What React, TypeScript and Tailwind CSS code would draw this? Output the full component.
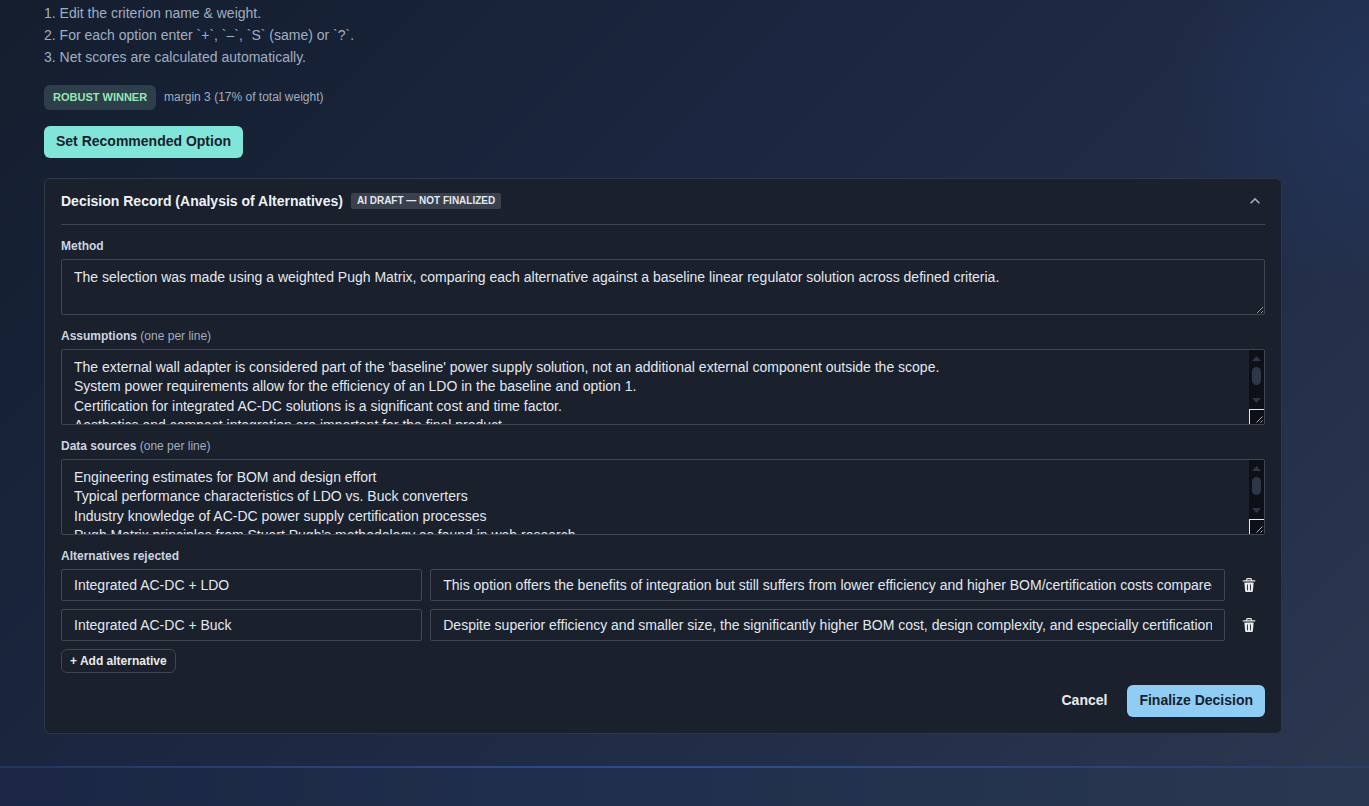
import React from 'react';

// Rejected alternatives with the reason each one was dropped
const initialAlternatives = [
    {
        id: 1,
        name: 'Integrated AC-DC + LDO',
        reason: 'This option offers the benefits of integration but still suffers from lower efficiency and higher BOM/certification costs compared to the baseline.'
    },
    {
        id: 2,
        name: 'Integrated AC-DC + Buck',
        reason: 'Despite superior efficiency and smaller size, the significantly higher BOM cost, design complexity, and especially certification effort rule it out.'
    }
];

const assumptions = [
    "The external wall adapter is considered part of the 'baseline' power supply solution, not an additional external component outside the scope.",
    'System power requirements allow for the efficiency of an LDO in the baseline and option 1.',
    'Certification for integrated AC-DC solutions is a significant cost and time factor.',
    'Aesthetics and compact integration are important for the final product.'
];

const dataSources = [
    'Engineering estimates for BOM and design effort',
    'Typical performance characteristics of LDO vs. Buck converters',
    'Industry knowledge of AC-DC power supply certification processes',
    "Pugh Matrix principles from Stuart Pugh's methodology as found in web research."
];

const fieldClass =
    'block w-full rounded-xs border border-[#40454f] bg-transparent px-3 text-sm text-[#e2e8f0] outline-none focus:border-[#90cdf4]';

const TrashIcon: React.FC = () => (
    <svg viewBox="0 0 24 24" className="size-3.5" fill="currentColor" aria-hidden="true">
        <path d="M19.452 7.5H4.547a.5.5 0 00-.5.545l1.287 14.136A2 2 0 007.326 24h9.347a2 2 0 001.992-1.819L19.95 8.045a.5.5 0 00-.129-.382.5.5 0 00-.369-.163zm-9.2 13a.75.75 0 01-1.5 0v-9a.75.75 0 011.5 0zm5 0a.75.75 0 01-1.5 0v-9a.75.75 0 011.5 0zM22 4h-4.75a.25.25 0 01-.25-.25V2.5A2.5 2.5 0 0014.5 0h-5A2.5 2.5 0 007 2.5v1.25a.25.25 0 01-.25.25H2a1 1 0 000 2h20a1 1 0 000-2zM9 3.75V2.5a.5.5 0 01.5-.5h5a.5.5 0 01.5.5v1.25a.25.25 0 01-.25.25h-5.5A.25.25 0 019 3.75z" />
    </svg>
);

// Dark scroll bar laid over the right edge of a long text area
const ScrollTrack: React.FC = () => (
    <div className="pointer-events-none absolute inset-y-px right-px flex w-[15px] flex-col bg-[#0d1117]" aria-hidden="true">
        <div className="flex flex-1 flex-col items-center py-1.5">
            <svg viewBox="0 0 9 5" className="h-[5px] w-[9px] fill-[#2d3748]">
                <path d="M4.5 0L9 5H0z" />
            </svg>
            <div className="mt-1.5 h-[18px] w-[9px] rounded-full bg-[#2d3748]" />
            <svg viewBox="0 0 9 5" className="mt-auto h-[5px] w-[9px] fill-[#2d3748]">
                <path d="M0 0h9L4.5 5z" />
            </svg>
        </div>
        <div className="flex size-[15px] items-end justify-end border-t border-l border-[#e5e7eb]">
            <svg viewBox="0 0 8 8" className="size-2" stroke="#c3c6cb" strokeWidth="0.9" fill="none">
                <path d="M0.5 6.5l6-6M4.5 6.5l2-2" />
            </svg>
        </div>
    </div>
);

interface TextFieldProps {
    id: string;
    label: string;
    hint?: string;
    value: string;
    heightClass: string;
    scrolls?: boolean;
}

const TextField: React.FC<TextFieldProps> = ({ id, label, hint, value, heightClass, scrolls }) => (
    <div>
        <label htmlFor={id} className="mb-1 block text-xs leading-[18px] font-semibold text-[#cbd5e0]">
            {label}
            {hint && <span className="font-normal text-[#a0aec0]"> {hint}</span>}
        </label>
        <div className="relative">
            <textarea
                id={id}
                defaultValue={value}
                className={`${fieldClass} ${heightClass} resize-y py-2 leading-snug [scrollbar-color:#2d3748_#0d1117]`}
            />
            {scrolls && <ScrollTrack />}
        </div>
    </div>
);

/**
 * DecisionRecord
 *
 * Card with the drafted analysis of alternatives, editable until finalized.
 */
const DecisionRecord: React.FC = () => {
    return (
        <section className="mt-5 rounded-md border border-[#2d3748] bg-[#1a202c] px-4 pt-3 pb-4">
            {/* Header */}
            <div className="flex items-center justify-between border-b border-[#3b4354] pb-[13px]">
                <div className="flex items-center gap-2">
                    <h2 className="text-sm leading-5 font-bold text-[#edf2f7]">
                        Decision Record (Analysis of Alternatives)
                    </h2>
                    <span className="rounded-xs bg-[#3a404c] px-1.5 text-[10px] leading-4 font-bold text-[#e2e8f0] uppercase">
                        AI draft — not finalized
                    </span>
                </div>
                <button type="button" aria-label="Collapse" className="text-[#a0aec0]">
                    <svg viewBox="0 0 24 24" className="size-5" fill="currentColor" aria-hidden="true">
                        <path d="M12 8l-6 6 1.41 1.41L12 10.83l4.59 4.58L18 14z" />
                    </svg>
                </button>
            </div>

            <form className="mt-3 flex flex-col gap-3" onSubmit={(e) => e.preventDefault()}>
                <TextField
                    id="method"
                    label="Method"
                    value="The selection was made using a weighted Pugh Matrix, comparing each alternative against a baseline linear regulator solution across defined criteria."
                    heightClass="h-14"
                />
                <TextField
                    id="assumptions"
                    label="Assumptions"
                    hint="(one per line)"
                    value={assumptions.join('\n')}
                    heightClass="h-19"
                    scrolls
                />
                <TextField
                    id="data-sources"
                    label="Data sources"
                    hint="(one per line)"
                    value={dataSources.join('\n')}
                    heightClass="h-19"
                    scrolls
                />

                {/* Alternatives */}
                <fieldset>
                    <legend className="mb-1 text-xs leading-[18px] font-semibold text-[#cbd5e0]">
                        Alternatives rejected
                    </legend>
                    <div className="flex flex-col items-start gap-2">
                        {initialAlternatives.map((alt) => (
                            <div key={alt.id} className="grid w-full grid-cols-[5fr_11fr_32px] gap-2">
                                <input
                                    type="text"
                                    aria-label="Alternative"
                                    defaultValue={alt.name}
                                    className={`${fieldClass} h-8`}
                                />
                                <input
                                    type="text"
                                    aria-label="Reason rejected"
                                    defaultValue={alt.reason}
                                    className={`${fieldClass} h-8`}
                                />
                                <button
                                    type="button"
                                    aria-label={`Remove ${alt.name}`}
                                    className="flex size-8 items-center justify-center rounded-md text-[#ebebec] hover:bg-white/10"
                                >
                                    <TrashIcon />
                                </button>
                            </div>
                        ))}
                        <button
                            type="button"
                            className="h-6 rounded-md border border-[#40454f] px-2 text-xs font-semibold text-[#ebebec] hover:bg-white/10"
                        >
                            + Add alternative
                        </button>
                    </div>
                </fieldset>

                {/* Actions */}
                <div className="flex justify-end gap-2">
                    <button
                        type="button"
                        className="h-8 rounded-md px-3 pb-0.5 text-sm font-semibold text-[#ebebec] hover:bg-white/10"
                    >
                        Cancel
                    </button>
                    <button
                        type="submit"
                        className="h-8 rounded-md bg-[#90cdf4] px-3 pb-0.5 text-sm font-semibold text-[#1a202c] hover:bg-[#63b3ed]"
                    >
                        Finalize Decision
                    </button>
                </div>
            </form>
        </section>
    );
};

const App: React.FC = () => {
    return (
        <div className="flex min-h-screen flex-col bg-[radial-gradient(circle_at_100%_12%,rgba(38,68,130,0.3),transparent_13%),linear-gradient(135deg,#141e2e_0%,#1b2640_40%,#222e48_70%,#2c3750_100%)] font-['Liberation_Sans',Arial,sans-serif]">
            <main className="pt-0.5 pr-[87px] pb-8 pl-11">
                {/* Instructions */}
                <ol className="list-inside list-decimal text-sm leading-[22px] text-[#a0aec0]">
                    <li>Edit the criterion name &amp; weight.</li>
                    <li>For each option enter `+`, `–`, `S` (same) or `?`.</li>
                    <li>Net scores are calculated automatically.</li>
                </ol>

                <div className="mt-[17px] flex items-start gap-2">
                    <span className="rounded-md bg-[#2c3f4a] px-[9px] text-[11px] leading-[25px] font-bold text-[#9ae6b4] uppercase">
                        Robust winner
                    </span>
                    <span className="text-xs leading-6 text-[#a0aec0]">margin 3 (17% of total weight)</span>
                </div>

                <button
                    type="button"
                    className="mt-4 block h-8 rounded-md bg-[#81e6d9] px-3 pb-0.5 text-sm font-semibold text-[#1a202c] hover:bg-[#4fd1c5]"
                >
                    Set Recommended Option
                </button>

                <DecisionRecord />
            </main>

            <footer className="flex flex-1 flex-col bg-linear-to-r from-[#1b2744] via-[#20304c] to-[#2a3750]">
                <div className="h-0.5 bg-linear-to-r from-[#22375f] via-[#2f4f8c] to-[#2b3d66]" />
            </footer>
        </div>
    );
};

export default App;
